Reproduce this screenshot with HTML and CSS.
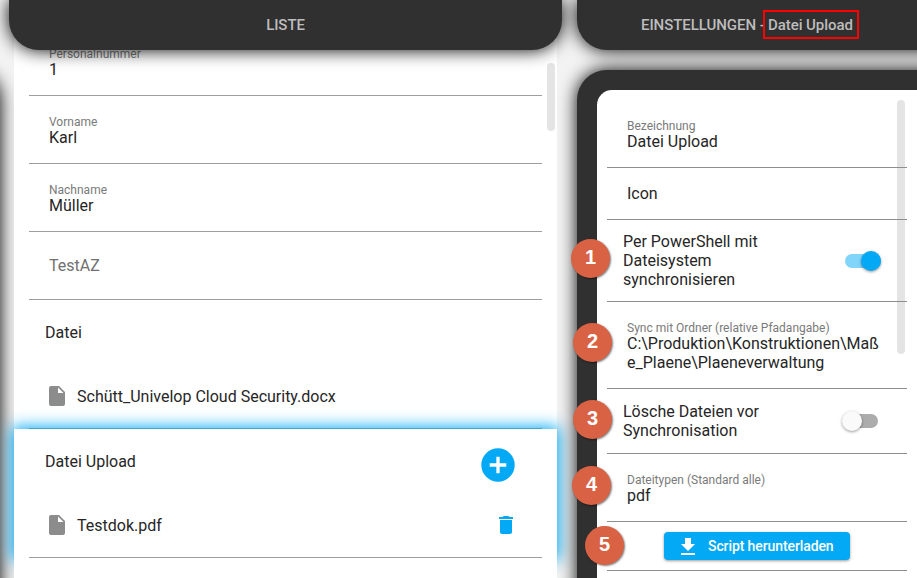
FILE: index.html
```html
<!DOCTYPE html>
<html lang="de">
<head>
<meta charset="utf-8">
<title>Liste</title>
<link rel="stylesheet" href="styles.css">
</head>
<body>
<div class="app">
  <div class="previous"></div>
  <main class="list">
    <header class="bar bar-list">LISTE</header>
    <div class="sheet">
      <div class="scroll list-scroll"></div>
      <div class="row field"><span class="label">Personalnummer</span><span class="value">1</span></div>
      <div class="row field"><span class="label">Vorname</span><span class="value">Karl</span></div>
      <div class="row field"><span class="label">Nachname</span><span class="value">Müller</span></div>
      <div class="row field empty">TestAZ</div>
      <div class="row files">
        <div class="line title">Datei</div>
        <div class="line file"><svg class="doc" viewBox="0 0 16 20"><path d="M2 0h8l6 6v12a2 2 0 0 1-2 2H2a2 2 0 0 1-2-2V2a2 2 0 0 1 2-2zM9 1.500V7h5.500z"/></svg>Schütt_Univelop Cloud Security.docx</div>
      </div>
      <div class="row files selected">
        <div class="line title"><span>Datei Upload</span><svg class="add" viewBox="0 0 34 34"><circle cx="17" cy="17" r="16.700"/><path d="M17 8.700v16.600M8.700 17h16.600"/></svg></div>
        <div class="line file"><svg class="doc" viewBox="0 0 16 20"><path d="M2 0h8l6 6v12a2 2 0 0 1-2 2H2a2 2 0 0 1-2-2V2a2 2 0 0 1 2-2zM9 1.500V7h5.500z"/></svg>Testdok.pdf<svg class="trash" viewBox="0 0 14 18"><path d="M1 16c0 1.100.9 2 2 2h8c1.100 0 2-.9 2-2V4H1zM14 1h-3.500l-1-1h-5l-1 1H0v2h14z"/></svg></div>
      </div>
      <div class="row rest"></div>
    </div>
  </main>
  <aside class="settings">
    <header class="bar bar-settings"><span class="section">EINSTELLUNGEN -</span><span class="marked">Datei Upload</span></header>
    <div class="panel">
      <div class="card">
        <div class="scroll settings-scroll"></div>
        <div class="option name"><span class="label">Bezeichnung</span><span class="value">Datei Upload</span></div>
        <div class="option icon"><span class="value">Icon</span></div>
        <div class="option toggle sync"><span>Per PowerShell mit<br>Dateisystem<br>synchronisieren</span><i class="switch on"></i></div>
        <div class="option folder"><span class="label">Sync mit Ordner (relative Pfadangabe)</span><span class="value">C:\Produktion\Konstruktionen\Maß<br>e_Plaene\Plaeneverwaltung</span></div>
        <div class="option toggle purge"><span>Lösche Dateien vor<br>Synchronisation</span><i class="switch"></i></div>
        <div class="option types"><span class="label">Dateitypen (Standard alle)</span><span class="value">pdf</span></div>
        <div class="option action"><button class="download"><svg viewBox="0 0 14 17"><path d="M14 6h-4V0H4v6H0l7 7zM0 15v2h14v-2z"/></svg>Script herunterladen</button></div>
      </div>
    </div>
  </aside>
  <b class="badge one">1</b>
  <b class="badge two">2</b>
  <b class="badge three">3</b>
  <b class="badge four">4</b>
  <b class="badge five">5</b>
</div>
</body>
</html>
```
FILE: styles.css
```css
* { box-sizing: border-box; }
body { margin: 0; font: 16px/19px Roboto, sans-serif; color: #262626; }
.app { position: relative; display: flex; width: 917px; height: 578px; overflow: hidden; background: #f3f3f3; }
.previous { flex: none; width: 30px; height: 560px; margin: 70px 0 0 -30px; border-radius: 0 30px 0 0; box-shadow: 0 0 18px #000; }
.list { flex: none; width: 553px; margin-left: 9px; }
.bar { position: relative; z-index: 3; display: flex; align-items: center; height: 50px; background: #303030; color: #bdbdbd; font-size: 15px; font-weight: 500; letter-spacing: -.06px; box-shadow: 0 0 18px #000; }
.bar-list { justify-content: center; border-radius: 0 0 30px 30px; }
.sheet { position: relative; margin: -22px 5px 0; background: #fff; }
.scroll { position: absolute; width: 8px; border-radius: 4px; background: #e4e4e4; }
.list-scroll { z-index: 1; top: 35px; right: 2px; height: 68px; }
.row { position: relative; }
.row:not(.rest)::after { content: ""; display: block; height: 1px; margin: 0 15px; background: #9e9e9e; }
.field { display: flex; flex-direction: column; height: 68px; padding: 20px 0 0 35px; }
.field::after { position: absolute; left: 0; right: 0; bottom: 0; }
.label { display: block; height: 12px; font-size: 12px; line-height: 13px; color: #7a7a7a; }
.value { display: block; }
.empty { padding-top: 24px; color: #707070; }
.line { display: flex; align-items: center; height: 64px; padding-left: 31px; }
.file { padding-left: 35px; }
.doc { width: 16px; height: 20px; margin-right: 12px; fill: #8c8c8c; fill-rule: evenodd; }
.title { justify-content: space-between; }
.add { width: 34px; height: 34px; margin: 8px 42px 0 0; fill: #03a9f4; stroke: #fff; stroke-width: 3.300; }
.add circle { stroke: none; }
.trash { width: 14px; height: 18px; margin: 0 44px 0 auto; fill: #03a9f4; }
.selected { background: #fff; box-shadow: 0 0 15px 2px #03a9f4; }
.rest { height: 30px; background: #fff; }
.settings { position: relative; z-index: 2; flex: none; width: 380px; margin-left: 15px; }
.bar-settings { border-radius: 0 0 0 30px; padding-left: 64px; }
.section { width: 122px; white-space: nowrap; }
.marked { height: 29px; width: 96px; padding: 4px 0 0 3px; border: 2px solid #f00; white-space: nowrap; margin-top: -1px; }
.panel { height: 560px; margin-top: 20px; padding: 20px 0 0 20px; border-radius: 30px 0 0; background: #303030; box-shadow: 0 0 18px #000; }
.card { position: relative; height: 540px; padding: 10px 50px 0 10px; border-radius: 15px 0 0; background: #fff; }
.settings-scroll { top: 10px; left: 300px; height: 254px; }
.option { position: relative; width: 300px; border-bottom: 1px solid #8e8e8e; padding-left: 20px; }
.name { height: 68px; padding-top: 20px; }
.icon { height: 52px; padding-top: 16px; }
.toggle { display: flex; align-items: center; justify-content: space-between; padding: 0 26px 0 16px; }
.sync { height: 82px; }
.folder { height: 87px; padding-top: 20px; }
.purge { height: 65px; padding-right: 29px; }
.types { height: 68px; padding-top: 20px; }
.action { height: 49px; padding: 10px 0 0 57px; }
.switch { display: flex; align-items: center; width: 33px; height: 14px; border-radius: 7px; background: #acacac; }
.switch::before { content: ""; flex: none; width: 20px; height: 20px; margin-left: -3px; border-radius: 50%; background: #fafafa; box-shadow: 0 1px 3px rgba(0,0,0,.4); }
.switch.on { width: 36px; background: #81d4fa; }
.switch.on::before { margin-left: 16px; background: #03a9f4; }
.download { display: flex; align-items: center; width: 186px; height: 28px; padding: 0 0 0 17px; border: 0; border-radius: 4px; background: #03a9f4; color: #fff; font: 500 14px/28px Roboto, sans-serif; letter-spacing: -.1px; white-space: nowrap; box-shadow: 0 1px 3px rgba(0,0,0,.4); }
.download svg { width: 14px; height: 17px; margin-right: 13px; fill: #fff; }
.badge { position: absolute; z-index: 4; width: 39px; height: 39px; border-radius: 50%; background: #d96244; color: #fff; font: bold 20px/37px "Liberation Sans", sans-serif; text-align: center; box-shadow: 1px 1px 2px rgba(0,0,0,.5); }
.one { left: 571px; top: 239px; }
.two { left: 573px; top: 323px; }
.three { left: 573px; top: 400px; }
.four { left: 572px; top: 466px; }
.five { left: 585px; top: 526px; }
```
